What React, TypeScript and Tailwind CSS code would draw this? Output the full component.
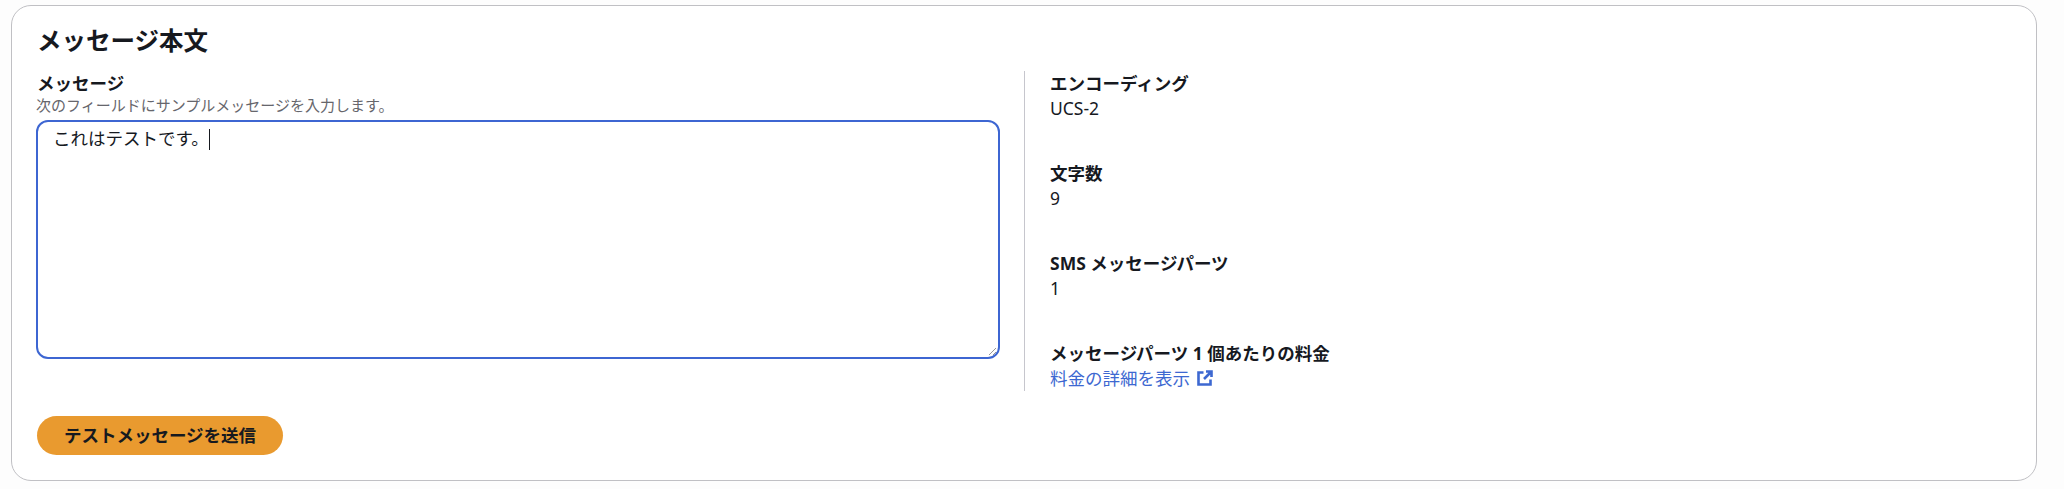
function Stat({ label, children }: { label: string; children: React.ReactNode }) {
    return (
        <div className="h-[90px]">
            <div className="text-[17.5px] leading-[24px] font-bold text-[#16191f]">{label}</div>
            <div className="mt-[1px] text-[17.5px] leading-[24px] text-[#16191f]">{children}</div>
        </div>
    );
}

export default function App() {
    return (
        <div className="h-[489px] bg-[#fdfdfd] pt-[5px] pl-[11px] pr-[27px] font-['Noto_Sans','Noto_Sans_CJK_JP',sans-serif]">
            <div className="h-[476px] rounded-[20px] border border-[#c0c0c4] bg-white pl-[25px] pt-[18px]">
                <h2 className="text-[24.5px] leading-[34px] font-bold text-[#16191f]">メッセージ本文</h2>

                <div className="mt-[13px] flex">
                    <div className="w-[963px]">
                        <div className="text-[17.5px] leading-[24px] font-bold text-[#16191f]">メッセージ</div>
                        <div className="-ml-px text-[15px] leading-[20px] text-[#66666c]">次のフィールドにサンプルメッセージを入力します。</div>
                        <div className="relative -ml-px mt-[5px] h-[239px] rounded-[12px] border-2 border-[#3d66d2] bg-white pl-[15px] pt-[2px] text-[17.5px] leading-[28px] text-[#16191f]">
                            これはテストです。
                            <span className="inline-block h-[21px] w-px bg-[#16191f] align-[-5px]" />
                            <svg className="absolute right-[1px] bottom-[1px]" width="9" height="9" viewBox="0 0 9 9" fill="none" stroke="#8a8a8a" strokeWidth="0.9">
                                <path d="M1 8 8 1M5 8 8 5" />
                            </svg>
                        </div>
                    </div>

                    <div className="ml-[24px] h-[320px] w-px bg-[#c6c6cd]" />

                    <div className="pl-[25px]">
                        <Stat label="エンコーディング">UCS-2</Stat>
                        <Stat label="文字数">9</Stat>
                        <Stat label="SMS メッセージパーツ">1</Stat>
                        <div>
                            <div className="text-[17.5px] leading-[24px] font-bold text-[#16191f]">メッセージパーツ 1 個あたりの料金</div>
                            <div className="mt-[1px] flex items-center text-[17.5px] leading-[24px] text-[#3d68d1]">
                                料金の詳細を表示
                                <svg className="ml-[7px]" width="16" height="16" viewBox="0 0 16 16" fill="none" stroke="#3d68d1" strokeWidth="2.6">
                                    <path d="M6.5 2.5H1.5v12h12v-5M9 1.5h5.5V7M14.5 1.5 7 9" />
                                </svg>
                            </div>
                        </div>
                    </div>
                </div>

                <button className="mt-[25px] h-[39px] w-[246px] rounded-full bg-[#e99a2f] text-[17.5px] font-bold text-[#16191f]">
                    テストメッセージを送信
                </button>
            </div>
        </div>
    );
}
